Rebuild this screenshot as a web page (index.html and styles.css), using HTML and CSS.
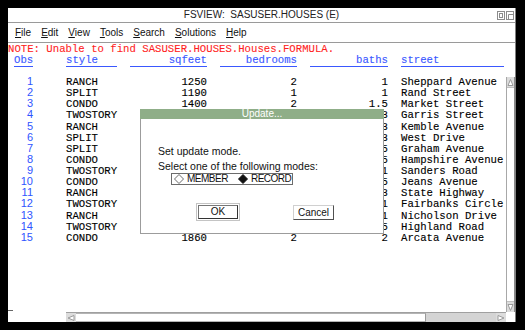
FILE: index.html
```html
<!DOCTYPE html>
<html>
<head>
<meta charset="utf-8">
<link rel="stylesheet" href="styles.css">
</head>
<body>
<div class="window">
  <header class="titlebar">
    <span></span>
    <span class="title">FSVIEW:  SASUSER.HOUSES (E)</span>
    <svg class="winicons" viewBox="0 0 17 9" width="17" height="9">
      <rect x="0.5" y="0.5" width="7" height="8" fill="none" stroke="#8c8c8c"/>
      <rect x="2.5" y="2.5" width="3" height="4" fill="none" stroke="#8c8c8c"/>
      <rect x="9.5" y="0.5" width="7" height="8" fill="none" stroke="#8c8c8c"/>
      <path d="M11.5 8.5 V3.5 H16.5" fill="none" stroke="#8c8c8c"/>
    </svg>
  </header>
  <nav class="menubar">
    <span><u>F</u>ile</span>
    <span><u>E</u>dit</span>
    <span><u>V</u>iew</span>
    <span><u>T</u>ools</span>
    <span><u>S</u>earch</span>
    <span><u>S</u>olutions</span>
    <span><u>H</u>elp</span>
  </nav>
  <main class="content">
    <div class="note">NOTE: Unable to find SASUSER.HOUSES.Houses.FORMULA.</div>
    <div class="row head">
      <span class="c0">Obs</span><span class="c1">style</span><span class="c2 num">sqfeet</span><span class="c3 num">bedrooms</span><span class="c4 num">baths</span><span class="c5">street</span>
    </div>
    <div class="body">
      <div class="rows">
        <div class="row"><span class="c0 obs">1</span><span class="c1">RANCH</span><span class="c2 num">1250</span><span class="c3 num">2</span><span class="c4 num">1</span><span class="c5">Sheppard Avenue</span></div>
        <div class="row"><span class="c0 obs">2</span><span class="c1">SPLIT</span><span class="c2 num">1190</span><span class="c3 num">1</span><span class="c4 num">1</span><span class="c5">Rand Street</span></div>
        <div class="row"><span class="c0 obs">3</span><span class="c1">CONDO</span><span class="c2 num">1400</span><span class="c3 num">2</span><span class="c4 num">1.5</span><span class="c5">Market Street</span></div>
        <div class="row"><span class="c0 obs">4</span><span class="c1">TWOSTORY</span><span class="c2 num">1810</span><span class="c3 num">4</span><span class="c4 num">3</span><span class="c5">Garris Street</span></div>
        <div class="row"><span class="c0 obs">5</span><span class="c1">RANCH</span><span class="c2 num">1500</span><span class="c3 num">3</span><span class="c4 num">3</span><span class="c5">Kemble Avenue</span></div>
        <div class="row"><span class="c0 obs">6</span><span class="c1">SPLIT</span><span class="c2 num">1615</span><span class="c3 num">4</span><span class="c4 num">3</span><span class="c5">West Drive</span></div>
        <div class="row"><span class="c0 obs">7</span><span class="c1">SPLIT</span><span class="c2 num">1305</span><span class="c3 num">3</span><span class="c4 num">1.5</span><span class="c5">Graham Avenue</span></div>
        <div class="row"><span class="c0 obs">8</span><span class="c1">CONDO</span><span class="c2 num">1390</span><span class="c3 num">3</span><span class="c4 num">2.5</span><span class="c5">Hampshire Avenue</span></div>
        <div class="row"><span class="c0 obs">9</span><span class="c1">TWOSTORY</span><span class="c2 num">1040</span><span class="c3 num">2</span><span class="c4 num">1</span><span class="c5">Sanders Road</span></div>
        <div class="row"><span class="c0 obs">10</span><span class="c1">CONDO</span><span class="c2 num">2105</span><span class="c3 num">4</span><span class="c4 num">2.5</span><span class="c5">Jeans Avenue</span></div>
        <div class="row"><span class="c0 obs">11</span><span class="c1">RANCH</span><span class="c2 num">1535</span><span class="c3 num">3</span><span class="c4 num">3</span><span class="c5">State Highway</span></div>
        <div class="row"><span class="c0 obs">12</span><span class="c1">TWOSTORY</span><span class="c2 num">1240</span><span class="c3 num">2</span><span class="c4 num">1</span><span class="c5">Fairbanks Circle</span></div>
        <div class="row"><span class="c0 obs">13</span><span class="c1">RANCH</span><span class="c2 num">720</span><span class="c3 num">1</span><span class="c4 num">1</span><span class="c5">Nicholson Drive</span></div>
        <div class="row"><span class="c0 obs">14</span><span class="c1">TWOSTORY</span><span class="c2 num">1745</span><span class="c3 num">4</span><span class="c4 num">2.5</span><span class="c5">Highland Road</span></div>
        <div class="row"><span class="c0 obs">15</span><span class="c1">CONDO</span><span class="c2 num">1860</span><span class="c3 num">2</span><span class="c4 num">2</span><span class="c5">Arcata Avenue</span></div>
      </div>
      <div class="vscroll">
        <div class="sarrow"><svg width="7" height="9" viewBox="0 0 7 9"><path d="M3.5 1.5 L6 7.5 H1 Z" fill="#fff" stroke="#9a9a9a"/></svg></div>
        <div class="vthumb"></div>
        <div class="sarrow"><svg width="7" height="9" viewBox="0 0 7 9"><path d="M3.5 7.5 L6 1.5 H1 Z" fill="#fff" stroke="#9a9a9a"/></svg></div>
      </div>
    </div>
    <div class="hbar">
      <div class="hleft"><span class="dash"></span></div>
      <div class="hscroll">
        <div class="sarrow h"><svg width="10" height="8" viewBox="0 0 10 8"><path d="M2 4 L8 1.5 V6.5 Z" fill="#fff" stroke="#9a9a9a"/></svg></div>
        <div class="hthumb"></div>
        <div class="htrack"></div>
        <div class="sarrow h"><svg width="10" height="8" viewBox="0 0 10 8"><path d="M8 4 L2 1.5 V6.5 Z" fill="#fff" stroke="#9a9a9a"/></svg></div>
      </div>
      <div class="corner"></div>
    </div>
  </main>

  <div class="dialog">
    <div class="dtitle">Update...</div>
    <div class="dbody">
      <p>Set update mode.</p>
      <p>Select one of the following modes:</p>
      <div class="radios">
        <svg class="dia" width="10" height="10" viewBox="0 0 10 10"><path d="M5 0.5 L9.5 5 L5 9.5 L0.5 5 Z" fill="#fff" stroke="#6a6a6a"/></svg>
        <span class="rlabel">MEMBER</span>
        <svg class="dia sel" width="10" height="10" viewBox="0 0 10 10"><path d="M5 0.5 L9.5 5 L5 9.5 L0.5 5 Z" fill="#111" stroke="#111"/></svg>
        <span class="rlabel">RECORD</span>
      </div>
      <div class="buttons">
        <div class="okwrap"><div class="ok">OK</div></div>
        <div class="cancel">Cancel</div>
      </div>
    </div>
  </div>
</div>
</body>
</html>
```

FILE: styles.css
```css
* { box-sizing: border-box; }
html, body { margin: 0; background: #000; }
body { padding: 8px; height: 330px; overflow: hidden; }

.window {
  position: relative;
  width: 508px;
  height: 314px;
  background: #fff;
  border-right: 1px solid #808080;
  display: flex;
  flex-direction: column;
  font-family: "Liberation Sans", Arial, sans-serif;
}

.titlebar {
  height: 15px;
  border-bottom: 1px solid #9a9a9a;
  display: grid;
  grid-template-columns: 1fr auto 1fr;
  align-items: center;
  font-size: 10px;
  line-height: 14px;
  color: #222;
}
.title { white-space: pre; }
.winicons { justify-self: end; margin-right: 1px; display: block; }

.menubar {
  height: 20px;
  border-bottom: 1px solid #9a9a9a;
  display: flex;
  gap: 10px;
  padding-left: 7px;
  align-items: center;
  font-size: 10px;
  line-height: 19px;
  color: #111;
}
.menubar u { text-decoration: underline; text-underline-offset: 1px; }

.content {
  flex: 1;
  display: flex;
  flex-direction: column;
  padding-top: 0.6px;
  min-height: 0;
}

.note {
  font: 10.67px/11.14px "Liberation Mono", "Courier New", monospace;
  color: #ff1f1f;
  white-space: pre;
  -webkit-text-stroke: 0.1px currentColor;
}

.row {
  display: flex;
  align-items: baseline;
  height: 11.14px;
  font: 10.67px/11.14px "Liberation Mono", "Courier New", monospace;
  color: #000;
  white-space: pre;
  -webkit-text-stroke: 0.12px currentColor;
}
.row > span { flex: none; }

.c0 { width: 19px; margin-left: 6px; }
.c1 { width: 51px; margin-left: 33px; }
.c2 { width: 77px; margin-left: 13px; }
.c3 { width: 77px; margin-left: 13px; }
.c4 { width: 78px; margin-left: 13px; }
.c5 { width: 103px; margin-left: 13px; }
.num { text-align: right; }

.head { height: 12.44px; }
.head span {
  color: #3a58ff;
  border-bottom: 1px solid #3a58ff;
  height: 12.44px;
}

.obs {
  font-family: "Liberation Sans", Arial, sans-serif;
  font-size: 11px;
  line-height: 9.2px;
  color: #2f55ff;
  text-align: right;
  -webkit-text-stroke: 0;
}

.body {
  flex: 1;
  display: flex;
  margin-top: 9.9px;
  min-height: 0;
}
.rows { flex: 1; }

.vscroll {
  width: 9px;
  display: flex;
  flex-direction: column;
  border-left: 1px solid #a8a8a8;
  border-right: 1px solid #8a8a8a;
  background: #fff;
}
.vscroll .sarrow { height: 10px; }
.vthumb { flex: 1; border-top: 1px solid #c0c0c0; border-bottom: 1px solid #c0c0c0; }

.sarrow {
  background: #dcdcdc;
  display: flex;
  align-items: center;
  justify-content: center;
}
.sarrow svg { display: block; }
.sarrow.h { width: 10px; }

.hbar { height: 10px; display: flex; }
.hleft { width: 58px; }
.dash { display: block; width: 5px; height: 1px; background: #666; margin-top: -2px; }
.hscroll {
  width: 440px;
  display: flex;
  background: #d4d4d4;
  border-top: 1px solid #a0a0a0;
}
.hthumb {
  width: 350px;
  background: #fff;
  border-top: 1px solid #b4b4b4;
  border-bottom: 1px solid #b4b4b4;
  border-right: 1px solid #9a9a9a;
}
.htrack { flex: 1; }
.corner { width: 9px; background: #fff; }

/* dialog overlay */
.dialog {
  position: absolute;
  left: 132px;
  top: 101px;
  width: 244px;
  font-family: "Liberation Sans", Arial, sans-serif;
  font-size: 10px;
  color: #111;
}
.dtitle {
  height: 10px;
  background: #8fae88;
  color: #fff;
  text-align: center;
  line-height: 10px;
  font-size: 10px;
}
.dbody {
  height: 115px;
  background: #fff;
  border: 1px solid #9c9c9c;
  border-top: none;
  padding: 25px 0 0 17px;
}
.dbody p { margin: 0; font-size: 10.5px; line-height: 15px; }

.radios {
  margin: -1px 0 0 13px;
  width: 122px;
  height: 12px;
  border: 1px solid #6c6c6c;
  display: flex;
  align-items: center;
  font-size: 10px;
  line-height: 10px;
}
.dia { display: block; margin-left: 2px; flex: none; }
.dia.sel { margin-left: 10px; }
.rlabel { margin-left: 3px; letter-spacing: -0.5px; }

.buttons { display: flex; align-items: center; margin-top: 18px; }
.okwrap {
  margin-left: 38px;
  width: 44px;
  height: 18px;
  border: 1px solid #c4c4c4;
  padding: 1px;
}
.ok {
  height: 100%;
  border: 1px solid;
  border-color: #777 #333 #333 #777;
  text-align: center;
  line-height: 12px;
}
.cancel {
  margin-left: 53px;
  width: 41px;
  height: 15px;
  border: 1px solid;
  border-color: #d0d0d0 #505050 #505050 #d0d0d0;
  text-align: center;
  line-height: 13px;
}
```
